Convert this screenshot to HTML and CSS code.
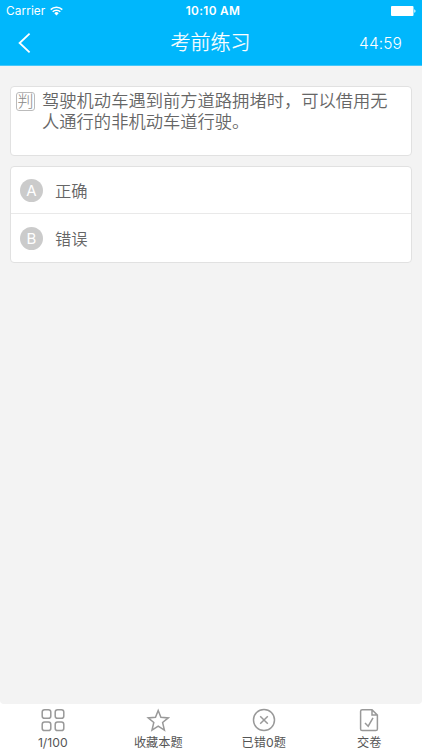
FILE: index.html
```html
<!DOCTYPE html>
<html lang="zh-CN">
<head>
    <meta charset="UTF-8">
    <meta name="viewport" content="width=device-width, initial-scale=1.0">
    <title>考前练习</title>
    <link rel="stylesheet" href="styles.css">
</head>
<body>
    <div class="app">
        <header class="header">
            <div class="status-bar">
                <div class="carrier">
                    <span>Carrier</span>
                    <svg class="wifi" width="13" height="10" viewBox="0 0 13 10" fill="none" stroke="#fff" stroke-width="1.5">
                        <path d="M0.7 3.6a8.2 8.2 0 0 1 11.6 0"/>
                        <path d="M2.7 5.7a5.4 5.4 0 0 1 7.6 0"/>
                        <path d="M4.3 7.2a3.1 3.1 0 0 1 4.4 0L6.5 9.4z" fill="#fff" stroke="none"/>
                    </svg>
                </div>
                <div class="clock">10:10 AM</div>
                <div class="battery">
                    <svg width="25" height="10" viewBox="0 0 25 10" fill="#fff">
                        <rect x="0" y="0" width="22.5" height="10" rx="1"/>
                        <path d="M23.3 3.2c1.6.5 1.6 3.1 0 3.6z"/>
                    </svg>
                </div>
            </div>
            <nav class="nav-bar">
                <a class="back">
                    <svg width="13" height="20" viewBox="0 0 13 20" fill="none" stroke="#fff" stroke-width="1.8">
                        <path d="M11.6 0.7L1.6 10l10 9.3"/>
                    </svg>
                </a>
                <h1 class="title">考前练习</h1>
                <div class="timer">44:59</div>
            </nav>
        </header>

        <main class="content">
            <section class="card question">
                <span class="tag">判</span>
                <p class="question-text">驾驶机动车遇到前方道路拥堵时，可以借用无人通行的非机动车道行驶。</p>
            </section>
            <ul class="card options">
                <li class="option"><span class="letter">A</span><span class="option-text">正确</span></li>
                <li class="option"><span class="letter">B</span><span class="option-text">错误</span></li>
            </ul>
        </main>

        <footer class="tab-bar">
            <a class="tab">
                <svg width="24" height="24" viewBox="0 0 24 24">
                    <rect x="1.2" y="1.7" width="8.6" height="8.6" rx="2.4"/>
                    <rect x="14.2" y="1.7" width="8.6" height="8.6" rx="2.4"/>
                    <rect x="1.2" y="14" width="8.6" height="8.6" rx="2.4"/>
                    <rect x="14.2" y="14" width="8.6" height="8.6" rx="2.4"/>
                </svg>
                <span>1/100</span>
            </a>
            <a class="tab">
                <svg width="24" height="24" viewBox="0 0 24 24">
                    <path d="M12.2 2.5l2.7 6.8 7.3.6-5.6 4.6 1.8 7.7-6.2-4-6.2 4 1.8-7.7-5.6-4.6 7.3-.6z"/>
                </svg>
                <span>收藏本题</span>
            </a>
            <a class="tab">
                <svg width="24" height="24" viewBox="0 0 24 24">
                    <circle cx="12" cy="12" r="10.5"/>
                    <path d="M8.2 8.2l7.6 7.6M15.8 8.2l-7.6 7.6"/>
                </svg>
                <span>已错0题</span>
            </a>
            <a class="tab">
                <svg width="24" height="24" viewBox="0 0 24 24">
                    <path d="M15 1.7H5.200a1.600 1.600 0 0 0-1.600 1.600v17.600a1.600 1.600 0 0 0 1.600 1.600h13.600a1.600 1.600 0 0 0 1.600-1.600V7.100zV7.100h5.400"/>
                    <path d="M8 15l3.200 3.200 4.800-8.400"/>
                </svg>
                <span>交卷</span>
            </a>
        </footer>
    </div>
</body>
</html>
```

FILE: styles.css
```css
* {
    box-sizing: border-box;
}
body {
    margin: 0;
    background: #fff;
    color: #555;
    font-family: Inter, "Noto Sans CJK SC", sans-serif;
}
.app {
    display: flex;
    flex-direction: column;
    height: 750px;
    overflow: hidden;
}
.header {
    height: 66px;
    background: #00b7fc;
    border-bottom: 1px solid #45c8fa;
    color: #fff;
}
.status-bar {
    display: grid;
    grid-template-columns: 1fr auto 1fr;
    align-items: center;
    height: 22px;
    padding: 0 6px;
    font-size: 11.8px;
    line-height: 22px;
}
.carrier {
    display: flex;
    align-items: center;
    gap: 5px;
    letter-spacing: 0.1px;
}
.clock {
    padding-left: 4px;
    font-size: 11.8px;
    font-weight: 600;
    letter-spacing: 0.35px;
}
.battery {
    display: flex;
    justify-content: flex-end;
}
.nav-bar {
    display: grid;
    grid-template-columns: 1fr auto 1fr;
    align-items: center;
    height: 42px;
    padding: 0 20px 0 18px;
}
.back {
    display: flex;
}
.title {
    margin: 0;
    padding-left: 1px;
    font-size: 20px;
    font-weight: 300;
    line-height: 42px;
    -webkit-text-stroke: 0.25px #fff;
}
.timer {
    font-size: 15.5px;
    font-weight: 350;
    letter-spacing: 0.1px;
    text-align: right;
}
.content {
    flex: 1;
    padding: 20px 10px 0;
    background: #f3f3f3;
    border-radius: 0 0 4px 4px;
}
.card {
    margin: 0 0 10px;
    background: #fff;
    border: 1px solid #e1e1e1;
    border-radius: 4px;
}
.question {
    display: flex;
    align-items: flex-start;
    gap: 7px;
    height: 70px;
    padding: 4px 5px;
}
.tag {
    flex: none;
    width: 19px;
    height: 19px;
    margin-top: 1px;
    border: 1px solid #bbb;
    border-radius: 3px;
    color: #888;
    font-size: 16px;
    font-weight: 300;
    line-height: 16px;
    text-align: center;
}
.question-text {
    width: 348px;
    margin: 0;
    color: #666;
    font-size: 17.3px;
    font-weight: 350;
    line-height: 20.5px;
}
.options {
    padding: 0;
    list-style: none;
}
.option {
    display: flex;
    align-items: center;
    gap: 12px;
    height: 46px;
    padding-left: 9px;
}
.option + .option {
    height: 49px;
    border-top: 1px solid #e9e9e9;
}
.letter {
    width: 23px;
    height: 23px;
    border-radius: 50%;
    background: #cbcbcb;
    color: #fff;
    font-size: 15px;
    line-height: 23px;
    text-align: center;
}
.option-text {
    padding-bottom: 1px;
    color: #666;
    font-size: 16.3px;
    font-weight: 350;
}
.tab-bar {
    display: flex;
    height: 46px;
    background: #fff;
}
.tab {
    display: flex;
    flex: 1;
    flex-direction: column;
    align-items: center;
    padding-top: 4px;
    color: #555;
    font-size: 12.2px;
    line-height: 20px;
}
.tab svg {
    flex: none;
    fill: none;
    stroke: #999;
    stroke-width: 1.5;
}
.tab span {
    margin-top: 1px;
}
```
